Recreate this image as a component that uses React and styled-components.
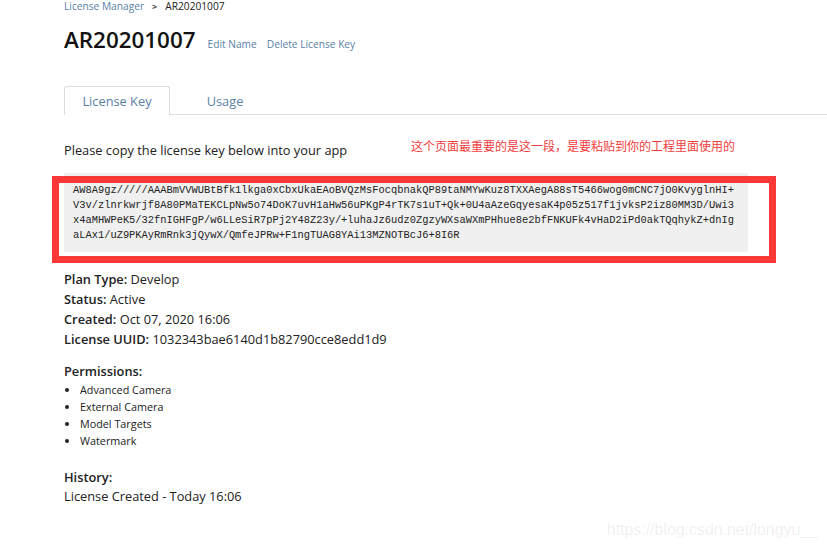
import React from 'react';
import styled, { createGlobalStyle } from 'styled-components';

const GlobalStyle = createGlobalStyle`
  html, body {
    margin: 0;
    padding: 0;
    background: #fff;
  }
  body {
    font-family: "Open Sans", "Noto Sans", sans-serif;
    color: #222;
  }
`;

const Page = styled.div`
  width: 827px;
  height: 547px;
  overflow: hidden;
  position: relative;
  box-sizing: border-box;
  padding-left: 64px;
`;

const Breadcrumb = styled.div`
  display: flex;
  align-items: center;
  height: 13px;
  font-size: 10.2px;
  line-height: 13px;
`;

const Crumb = styled.a`
  color: #5a7fa8;
`;

const Chevron = styled.span`
  margin: 0 8px 0 8px;
  font-size: 9px;
  font-weight: 700;
  color: #444;
`;

const TitleRow = styled.div`
  display: flex;
  align-items: baseline;
  margin-top: 12px;
`;

const Title = styled.h1`
  margin: 0 12px 0 0;
  font-size: 22.4px;
  line-height: 30px;
  font-weight: 600;
  color: #111;
`;

const TitleLink = styled.a`
  margin-right: 10px;
  font-size: 10.2px;
  color: #5a7fa8;
`;

const Tabs = styled.div`
  display: flex;
  width: 763px;
  height: 28px;
  margin-top: 31px;
  border-bottom: 1px solid #ddd;
`;

const Tab = styled.div`
  box-sizing: border-box;
  width: ${({ $active }) => ($active ? 106 : 110)}px;
  height: 29px;
  font-size: 12.8px;
  line-height: 29px;
  text-align: center;
  color: #5a7fa8;
  background: ${({ $active }) => ($active ? '#fff' : 'transparent')};
  border: 1px solid ${({ $active }) => ($active ? '#ddd' : 'transparent')};
  border-bottom: 0;
  border-radius: 3px 3px 0 0;
`;

const IntroRow = styled.div`
  display: flex;
  align-items: flex-start;
  justify-content: space-between;
  width: 671px;
  margin-top: 20px;
`;

const Intro = styled.p`
  margin: 0;
  font-size: 12.8px;
  line-height: 30px;
  color: #222;
`;

const Annotation = styled.span`
  margin-top: 3px;
  font-family: "Noto Sans CJK SC", sans-serif;
  font-size: 12px;
  line-height: 16px;
  color: #f23c3c;
`;

const KeyBox = styled.div`
  position: relative;
  box-sizing: border-box;
  width: 684px;
  height: 79px;
  margin-top: 8px;
  padding: 10px 9px 0;
  background: #f0f0f0;
`;

const KeyLine = styled.div`
  font-family: "Liberation Mono", "Courier New", monospace;
  font-size: 10.4px;
  line-height: 15px;
  white-space: nowrap;
  color: #222;
`;

const RedFrame = styled.div`
  position: absolute;
  top: 3px;
  left: -12px;
  width: 724px;
  height: 87px;
  box-sizing: border-box;
  border: 7px solid #fb3737;
  pointer-events: none;
`;

const Details = styled.div`
  margin-top: 17px;
`;

const Detail = styled.div`
  font-size: 12.8px;
  line-height: 20px;
  color: #222;
`;

const Label = styled.span`
  font-weight: 600;
`;

const SectionTitle = styled.div`
  margin-top: ${({ $gap }) => $gap}px;
  font-size: 12.8px;
  line-height: 18px;
  font-weight: 600;
  color: #222;
`;

const Permissions = styled.ul`
  margin: 1px 0 0;
  padding: 0 0 0 16px;
  list-style: disc;
`;

const Permission = styled.li`
  font-size: 10.8px;
  line-height: 17px;
  color: #222;
`;

const Watermark = styled.div`
  position: absolute;
  right: 9px;
  bottom: 8px;
  font-family: "Liberation Sans", sans-serif;
  font-size: 15.9px;
  color: rgba(0, 0, 0, 0.08);
`;

const keyLines = [
  'AW8A9gz/////AAABmVVWUBtBfk1lkga0xCbxUkaEAoBVQzMsFocqbnakQP89taNMYwKuz8TXXAegA88sT5466wog0mCNC7jO0KvyglnHI+',
  'V3v/zlnrkwrjf8A80PMaTEKCLpNw5o74DoK7uvH1aHw56uPKgP4rTK7s1uT+Qk+0U4aAzeGqyesaK4p05z517f1jvksP2iz80MM3D/Uwi3',
  'x4aMHWPeK5/32fnIGHFgP/w6LLeSiR7pPj2Y48Z23y/+luhaJz6udz0ZgzyWXsaWXmPHhue8e2bfFNKUFk4vHaD2iPd0akTQqhykZ+dnIg',
  'aLAx1/uZ9PKAyRmRnk3jQywX/QmfeJPRw+F1ngTUAG8YAi13MZNOTBcJ6+8I6R',
];

const details = [
  ['Plan Type:', 'Develop'],
  ['Status:', 'Active'],
  ['Created:', 'Oct 07, 2020 16:06'],
  ['License UUID:', '1032343bae6140d1b82790cce8edd1d9'],
];

const permissions = ['Advanced Camera', 'External Camera', 'Model Targets', 'Watermark'];

export default function App() {
  return (
    <Page>
      <GlobalStyle />
      <Breadcrumb>
        <Crumb>License Manager</Crumb>
        <Chevron>&gt;</Chevron>
        <span>AR20201007</span>
      </Breadcrumb>
      <TitleRow>
        <Title>AR20201007</Title>
        <TitleLink>Edit Name</TitleLink>
        <TitleLink>Delete License Key</TitleLink>
      </TitleRow>
      <Tabs>
        <Tab $active>License Key</Tab>
        <Tab>Usage</Tab>
      </Tabs>
      <IntroRow>
        <Intro>Please copy the license key below into your app</Intro>
        <Annotation>这个页面最重要的是这一段，是要粘贴到你的工程里面使用的</Annotation>
      </IntroRow>
      <KeyBox>
        {keyLines.map(line => (
          <KeyLine key={line}>{line}</KeyLine>
        ))}
        <RedFrame />
      </KeyBox>
      <Details>
        {details.map(([label, value]) => (
          <Detail key={label}>
            <Label>{label}</Label> {value}
          </Detail>
        ))}
      </Details>
      <SectionTitle $gap={13}>Permissions:</SectionTitle>
      <Permissions>
        {permissions.map(name => (
          <Permission key={name}>{name}</Permission>
        ))}
      </Permissions>
      <SectionTitle $gap={19}>History:</SectionTitle>
      <Detail>License Created - Today 16:06</Detail>
      <Watermark>https://blog.csdn.net/longyu__</Watermark>
    </Page>
  );
}
